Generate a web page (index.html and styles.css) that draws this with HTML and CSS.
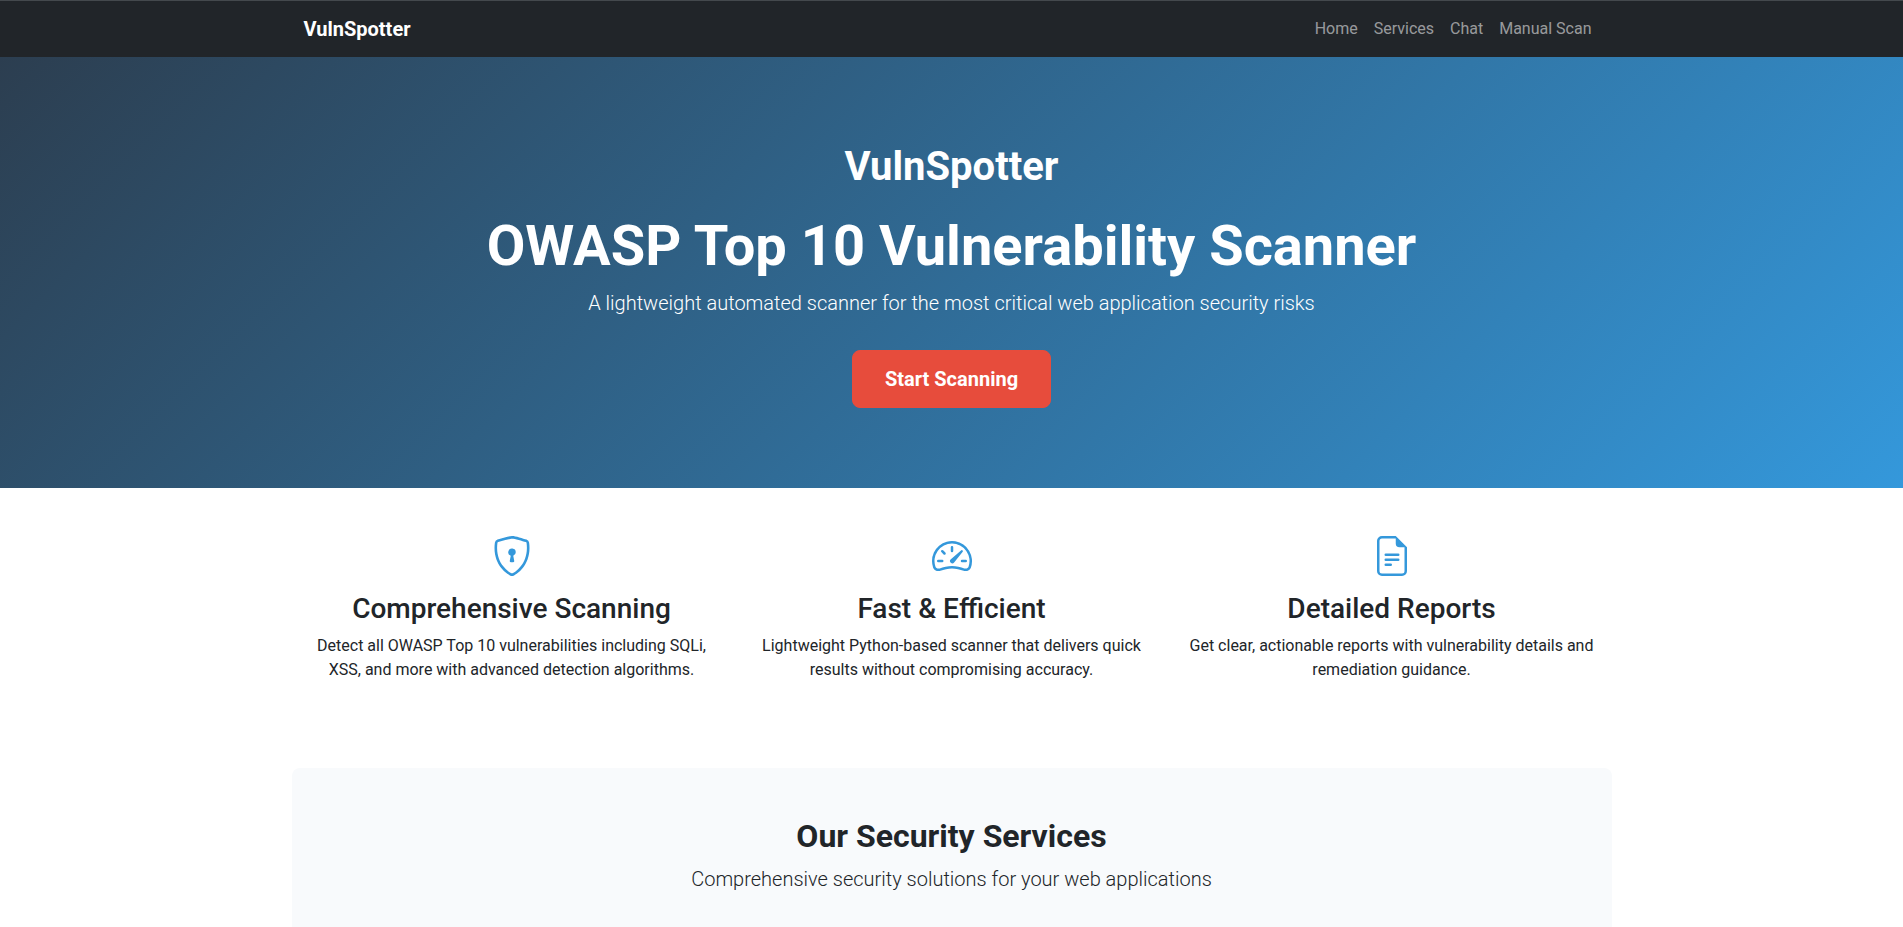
FILE: index.html
```html
<!DOCTYPE html>
<html lang="en">
<head>
<meta charset="utf-8">
<meta name="viewport" content="width=device-width, initial-scale=1">
<title>VulnSpotter</title>
<link rel="stylesheet" href="styles.css">
</head>
<body>
<header class="navbar">
  <div class="container navbar-inner">
    <a class="navbar-brand" href="#">VulnSpotter</a>
    <nav class="navbar-nav" aria-label="Main">
      <a class="nav-link" href="#">Home</a>
      <a class="nav-link" href="#services">Services</a>
      <a class="nav-link" href="#">Chat</a>
      <a class="nav-link" href="#">Manual Scan</a>
    </nav>
  </div>
</header>
<main>
  <section class="hero">
    <div class="container">
      <div class="hero-brand">VulnSpotter</div>
      <h1 class="hero-title">OWASP Top 10 Vulnerability Scanner</h1>
      <p class="lead hero-lead">A lightweight automated scanner for the most critical web application security risks</p>
      <button class="btn-scan" type="button">Start Scanning</button>
    </div>
  </section>

  <section class="container features">
    <article class="feature">
      <svg class="feature-icon" viewBox="0 0 16 16" aria-hidden="true">
        <path d="M5.338 1.59a61 61 0 0 0-2.837.856.48.48 0 0 0-.328.39c-.554 4.157.726 7.19 2.253 9.188a10.7 10.7 0 0 0 2.287 2.233c.346.244.652.42.893.533q.18.085.293.118a1 1 0 0 0 .101.025 1 1 0 0 0 .1-.025q.114-.034.294-.118c.24-.113.547-.29.893-.533a10.7 10.7 0 0 0 2.287-2.233c1.527-1.997 2.807-5.031 2.253-9.188a.48.48 0 0 0-.328-.39c-.651-.213-1.75-.56-2.837-.855C9.552 1.29 8.531 1.067 8 1.067c-.53 0-1.552.223-2.662.524zM5.072.56C6.157.265 7.31 0 8 0s1.843.265 2.928.56c1.11.3 2.229.655 2.887.87a1.54 1.54 0 0 1 1.044 1.262c.596 4.477-.787 7.795-2.465 9.99a11.8 11.8 0 0 1-2.517 2.453 7 7 0 0 1-1.048.625c-.28.132-.581.24-.829.24s-.548-.108-.829-.24a7 7 0 0 1-1.048-.625 11.8 11.8 0 0 1-2.517-2.453C1.928 10.487.545 7.169 1.141 2.692A1.54 1.54 0 0 1 2.185 1.43 63 63 0 0 1 5.072.56"/>
        <path d="M9.5 6.5a1.5 1.5 0 0 1-1 1.415l.385 1.99a.5.5 0 0 1-.491.595h-.788a.5.5 0 0 1-.49-.595l.384-1.99a1.5 1.5 0 1 1 2-1.415"/>
      </svg>
      <h3 class="feature-title">Comprehensive Scanning</h3>
      <p class="feature-text">Detect all OWASP Top 10 vulnerabilities including SQLi, XSS, and more with advanced detection algorithms.</p>
    </article>
    <article class="feature">
      <svg class="feature-icon" viewBox="0 0 16 16" aria-hidden="true">
        <path d="M8 4a.5.5 0 0 1 .5.5V6a.5.5 0 0 1-1 0V4.5A.5.5 0 0 1 8 4M3.732 5.732a.5.5 0 0 1 .707 0l.915.914a.5.5 0 1 1-.708.708l-.914-.915a.5.5 0 0 1 0-.707M2 10a.5.5 0 0 1 .5-.5h1.586a.5.5 0 0 1 0 1H2.5A.5.5 0 0 1 2 10m9.5 0a.5.5 0 0 1 .5-.5h1.5a.5.5 0 0 1 0 1H12a.5.5 0 0 1-.5-.5m.754-4.246a.39.39 0 0 0-.527-.02L7.547 9.31a.91.91 0 1 0 1.302 1.258l3.434-4.297a.39.39 0 0 0-.029-.518z"/>
        <path fill-rule="evenodd" d="M0 10a8 8 0 1 1 15.547 2.661c-.442 1.253-1.845 1.602-2.932 1.25C11.309 13.488 9.475 13 8 13c-1.474 0-3.31.488-4.615.911-1.087.352-2.49.003-2.932-1.25A8 8 0 0 1 0 10m8-7a7 7 0 0 0-6.603 9.329c.203.575.923.876 1.68.63C4.397 12.533 6.358 12 8 12s3.604.532 4.923.96c.757.245 1.477-.056 1.68-.631A7 7 0 0 0 8 3"/>
      </svg>
      <h3 class="feature-title">Fast &amp; Efficient</h3>
      <p class="feature-text">Lightweight Python-based scanner that delivers quick results without compromising accuracy.</p>
    </article>
    <article class="feature">
      <svg class="feature-icon" viewBox="0 0 16 16" aria-hidden="true">
        <path d="M5.5 7a.5.5 0 0 0 0 1h5a.5.5 0 0 0 0-1zM5 9.5a.5.5 0 0 1 .5-.5h5a.5.5 0 0 1 0 1h-5a.5.5 0 0 1-.5-.5m0 2a.5.5 0 0 1 .5-.5h2a.5.5 0 0 1 0 1h-2a.5.5 0 0 1-.5-.5"/>
        <path d="M9.5 0H4a2 2 0 0 0-2 2v12a2 2 0 0 0 2 2h8a2 2 0 0 0 2-2V4.5zm0 1v2A1.5 1.5 0 0 0 11 4.5h2V14a1 1 0 0 1-1 1H4a1 1 0 0 1-1-1V2a1 1 0 0 1 1-1z"/>
      </svg>
      <h3 class="feature-title">Detailed Reports</h3>
      <p class="feature-text">Get clear, actionable reports with vulnerability details and remediation guidance.</p>
    </article>
  </section>

  <section class="container services" id="services">
    <h2 class="services-title">Our Security Services</h2>
    <p class="lead">Comprehensive security solutions for your web applications</p>
  </section>
</main>
</body>
</html>
```
FILE: styles.css
```css
*,
*::before,
*::after {
  box-sizing: border-box;
}

body {
  margin: 0;
  font-family: Roboto, "Liberation Sans", sans-serif;
  font-size: 16px;
  line-height: 24px;
  color: #212529;
  background: #fff;
}

h1, h2, h3, p {
  margin: 0;
}

.container {
  width: 100%;
  max-width: 1320px;
  margin: 0 auto;
  padding: 0 12px;
}

.navbar {
  background: #212529;
  border-top: 1px solid #44494d;
  padding: 8px 0;
}

.navbar-inner {
  display: flex;
  align-items: center;
  justify-content: space-between;
}

.navbar-brand {
  font-size: 20px;
  line-height: 30px;
  font-weight: 700;
  color: #fff;
  text-decoration: none;
}

.navbar-nav {
  display: flex;
}

.nav-link {
  padding: 8px;
  color: rgba(255, 255, 255, 0.55);
  text-decoration: none;
}

.hero {
  padding: 80px 0;
  text-align: center;
  color: #fff;
  background: linear-gradient(135deg, #2c3e50, #3498db);
}

.hero-brand {
  margin-bottom: 16px;
  font-size: 40px;
  line-height: 60px;
  font-weight: 700;
}

.hero-title {
  margin-bottom: 8px;
  font-size: 56px;
  line-height: 67px;
  font-weight: 700;
}

.lead {
  font-size: 20px;
  line-height: 30px;
  font-weight: 300;
}

.hero-lead {
  margin-bottom: 32px;
}

.btn-scan {
  display: block;
  margin: 0 auto;
  padding: 13px 32px;
  border: 1px solid #e74c3c;
  border-radius: 8px;
  background: #e74c3c;
  color: #fff;
  font-family: inherit;
  font-size: 20px;
  line-height: 30px;
  font-weight: 700;
  cursor: pointer;
}

.features {
  display: grid;
  grid-template-columns: repeat(3, 1fr);
  gap: 24px;
  padding-top: 48px;
  padding-bottom: 86px;
  text-align: center;
}

.feature-icon {
  display: block;
  width: 40px;
  height: 40px;
  margin: 0 auto 16px;
  fill: #3498db;
}

.feature-title {
  margin-bottom: 8px;
  font-size: 28px;
  line-height: 34px;
  font-weight: 500;
}

.services {
  padding-top: 48px;
  padding-bottom: 48px;
  border-radius: 8px;
  background: #f8fafc;
  text-align: center;
}

.services-title {
  margin-bottom: 8px;
  font-size: 32px;
  line-height: 40px;
  font-weight: 700;
}
```
